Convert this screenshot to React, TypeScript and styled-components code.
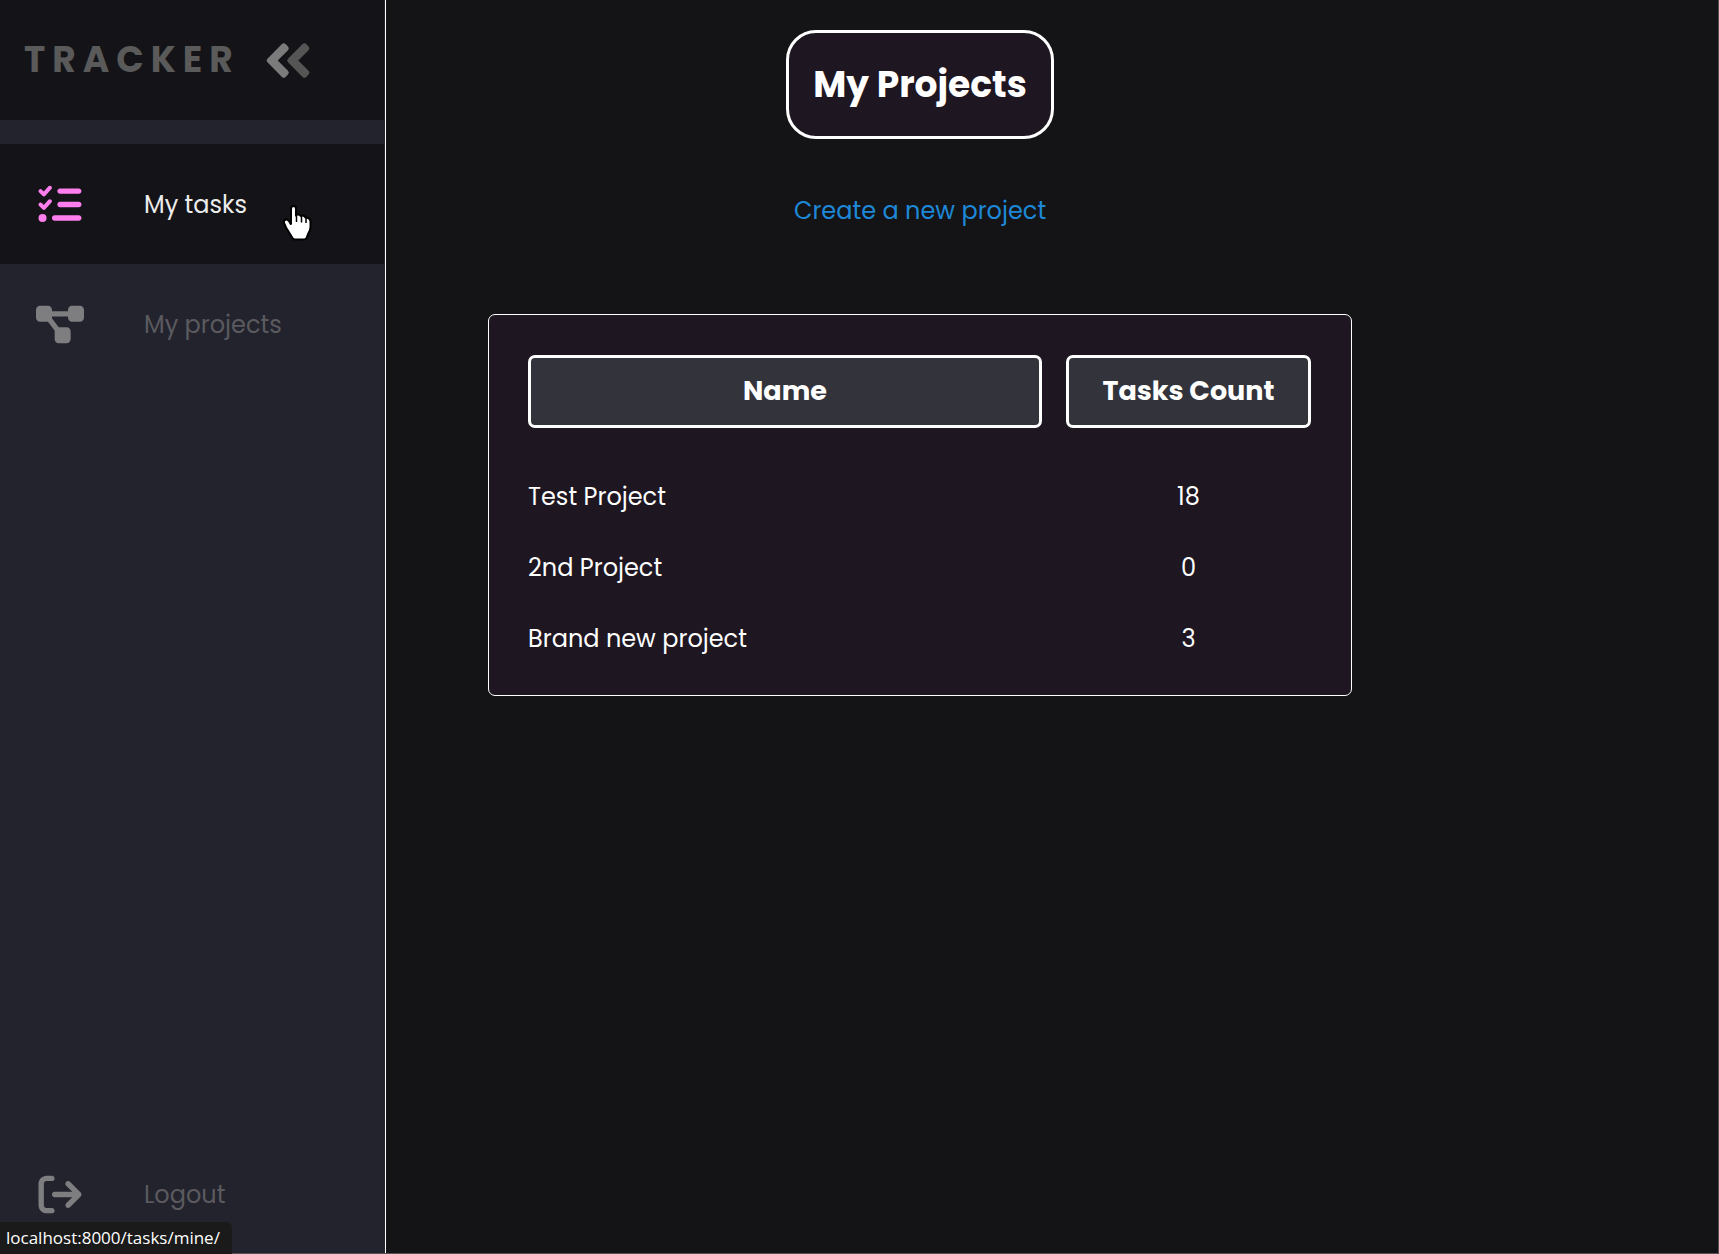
import React from "react";
import styled, { createGlobalStyle } from "styled-components";
import { FaArrowRightFromBracket, FaDiagramProject, FaListCheck } from "react-icons/fa6";

const GlobalStyle = createGlobalStyle`
  *, *::before, *::after { box-sizing: border-box; }
  body {
    margin: 0;
    background: #141416;
    color: #ffffff;
    font-family: Poppins, Inter, "Noto Sans", sans-serif;
    font-size: 24px;
    line-height: 36px;
  }
`;

const Page = styled.div`
  display: grid;
  grid-template-columns: 386px minmax(0, 1fr);
  min-height: 100vh;

  &::after {
    content: "";
    position: fixed;
    inset: 0;
    border: solid #565155;
    border-width: 0 1px 1px 0;
    pointer-events: none;
  }
`;

const Sidebar = styled.nav`
  display: flex;
  flex-direction: column;
  padding-right: 1px;
  background: #23232e;
  border-right: 1px solid #ffffff;
`;

const Brand = styled.a`
  display: flex;
  align-items: center;
  gap: 24px;
  height: 120px;
  margin-bottom: 24px;
  padding-left: 24px;
  background: #141418;
  color: #5a5a5a;
  font-size: 36px;
  font-weight: 700;
  letter-spacing: 7px;
  text-decoration: none;
`;

const Chevrons = styled.svg`
  width: 48px;
  height: 55px;
`;

const NavList = styled.ul`
  display: flex;
  flex: 1;
  flex-direction: column;
  margin: 0;
  padding: 0;
  list-style: none;
`;

const NavItem = styled.li<{ $last?: boolean }>`
  position: relative;
  margin-top: ${(p) => (p.$last ? "auto" : "0")};
`;

const NavLink = styled.a<{ $active?: boolean }>`
  display: flex;
  align-items: center;
  gap: 60px;
  height: 120px;
  padding: 0 36px;
  background: ${(p) => (p.$active ? "#141418" : "transparent")};
  color: ${(p) => (p.$active ? "#ececec" : "#5a5a5f")};
  text-decoration: none;

  svg {
    flex: none;
    width: 48px;
    height: 43px;
    color: ${(p) => (p.$active ? "#ff7eee" : "#7e7e80")};
  }
`;

const NavLabel = styled.span`
  padding-top: 2px;
`;

const Pointer = styled.svg`
  position: absolute;
  left: 283px;
  top: 61px;
  width: 29px;
  height: 36px;
`;

const Main = styled.main`
  display: flex;
  flex-direction: column;
  align-items: center;
  padding: 30px 265px 48px 0;
`;

const Title = styled.h1`
  margin: 0 0 54px;
  padding: 24px;
  background: #1e1621;
  border: 3px solid #ffffff;
  border-radius: 30px;
  font-size: 36px;
  font-weight: 700;
  line-height: 55px;
`;

const CreateLink = styled.a`
  margin-bottom: 85px;
  color: #1e88d8;
  text-decoration: none;
`;

const Card = styled.section`
  width: 100%;
  max-width: 864px;
  padding: 40px 16px 21px 15px;
  background: #1e1621;
  border: 1px solid #ffffff;
  border-radius: 7px;
`;

const Table = styled.table`
  width: 100%;
  border-collapse: separate;
  border-spacing: 24px 0;
  table-layout: fixed;
`;

const CountColumn = styled.col`
  width: 245px;
`;

const HeadCell = styled.th`
  padding: 11px 12px 13px;
  background: #33333b;
  border: 3px solid #ffffff;
  border-radius: 7px;
  font-size: 27px;
  font-weight: 700;
  line-height: 43px;
`;

const Row = styled.tr`
  &:first-child td { padding-top: 51px; }
`;

const Cell = styled.td<{ $centered?: boolean }>`
  padding: 18px 0 17px;
  text-align: ${(p) => (p.$centered ? "center" : "left")};
`;

const StatusBar = styled.div`
  position: fixed;
  left: 0;
  bottom: 0;
  z-index: 1;
  height: 32px;
  padding: 0 12px 0 6px;
  background: #1a1a1a;
  border-top-right-radius: 6px;
  font-family: "Segoe UI", "Open Sans", "Noto Sans", sans-serif;
  font-size: 17px;
  line-height: 32px;
`;

const projects = [
  { name: "Test Project", tasks: 18 },
  { name: "2nd Project", tasks: 0 },
  { name: "Brand new project", tasks: 3 },
];

export default function App() {
  return (
    <>
      <GlobalStyle />
      <Page>
        <Sidebar>
          <Brand href="#home">
            <span>TRACKER</span>
            <Chevrons viewBox="0 0 448 512" aria-hidden="true">
              <g transform="rotate(180 224 256)">
                <path
                  fill="#555555"
                  d="M224 273L88.37 409a23.78 23.78 0 0 1-33.8 0L32 386.36a23.94 23.94 0 0 1 0-33.89l96.13-96.37L32 159.73a23.94 23.94 0 0 1 0-33.89l22.44-22.79a23.78 23.78 0 0 1 33.8 0L223.88 239a23.94 23.94 0 0 1 .1 34z"
                />
                <path
                  fill="#7b7b7b"
                  d="M415.89 273L280.34 409a23.77 23.77 0 0 1-33.79 0L224 386.26a23.94 23.94 0 0 1 0-33.89L320.11 256l-96-96.47a23.94 23.94 0 0 1 0-33.89l22.52-22.59a23.77 23.77 0 0 1 33.79 0L416 239a24 24 0 0 1-.11 34z"
                />
              </g>
            </Chevrons>
          </Brand>
          <NavList>
            <NavItem>
              <NavLink href="#tasks" $active>
                <FaListCheck aria-hidden="true" />
                <NavLabel>My tasks</NavLabel>
              </NavLink>
              <Pointer viewBox="0 0 29 36" aria-hidden="true">
                <path
                  d="M8 19.500V4Q8 1 10.500 1Q13 1 13 4V10Q15.500 8.500 18 11Q20.500 9.500 22.500 12.500Q27.500 12.500 27.500 17V22Q27.500 25 25.500 28L23.500 33Q23 34.500 21 34.500H12Q10.500 34.500 9.500 33L3 22.500L1 18Q0.500 14.500 3.500 14.500Q5.500 14.500 8 19.500Z"
                  fill="#ffffff"
                  stroke="#000000"
                  strokeWidth="2"
                />
                <path d="M13.500 10V17M18.500 11V17.500M23 12.500V18" stroke="#000000" strokeWidth="1.500" />
              </Pointer>
            </NavItem>
            <NavItem>
              <NavLink href="#projects">
                <FaDiagramProject aria-hidden="true" />
                <NavLabel>My projects</NavLabel>
              </NavLink>
            </NavItem>
            <NavItem $last>
              <NavLink href="#logout">
                <FaArrowRightFromBracket aria-hidden="true" />
                <NavLabel>Logout</NavLabel>
              </NavLink>
            </NavItem>
          </NavList>
        </Sidebar>
        <Main>
          <Title>My Projects</Title>
          <CreateLink href="#create">Create a new project</CreateLink>
          <Card>
            <Table>
              <colgroup>
                <col />
                <CountColumn />
              </colgroup>
              <thead>
                <tr>
                  <HeadCell scope="col">Name</HeadCell>
                  <HeadCell scope="col">Tasks Count</HeadCell>
                </tr>
              </thead>
              <tbody>
                {projects.map((project) => (
                  <Row key={project.name}>
                    <Cell>{project.name}</Cell>
                    <Cell $centered>{project.tasks}</Cell>
                  </Row>
                ))}
              </tbody>
            </Table>
          </Card>
        </Main>
      </Page>
      <StatusBar>localhost:8000/tasks/mine/</StatusBar>
    </>
  );
}
